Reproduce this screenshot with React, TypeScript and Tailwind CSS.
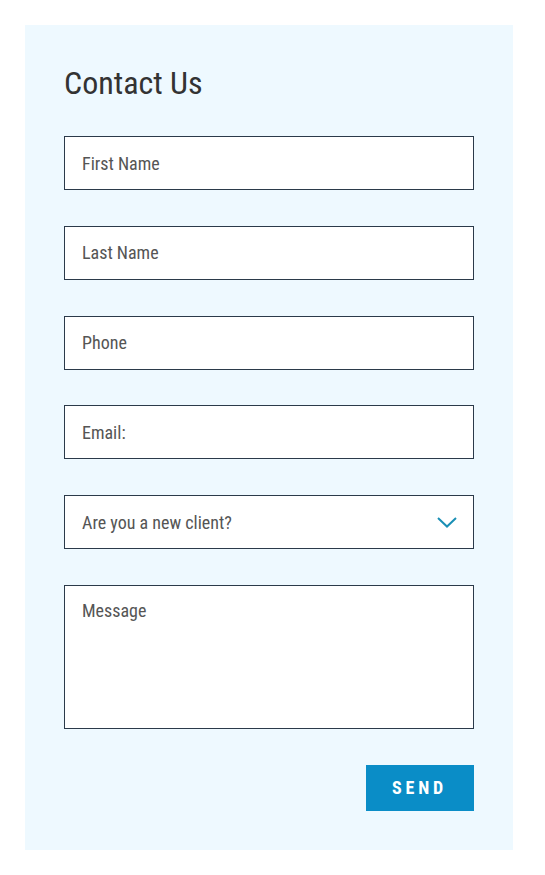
import React from 'react';

const fieldCls =
  "block w-full h-[54px] border border-[#2b3a4a] bg-white px-[17px] text-[18px] text-[#4a4a4a] placeholder-[#555] outline-none";

export default function App() {
  return (
    <div className="min-h-screen bg-white p-[25px] pr-[32px]" style={{ fontFamily: "'Roboto Condensed', 'Liberation Sans Narrow', 'DejaVu Sans Condensed', Roboto, sans-serif" }}>
      <div className="bg-[#eef9ff] px-[39px] pt-[38px] pb-[39px] font-stretch-condensed">
        <h2 className="text-[32px] leading-[40px] text-[#333] font-normal">Contact Us</h2>
        <form className="mt-[33px] flex flex-col gap-[35.8px]" onSubmit={(e) => e.preventDefault()}>
          <input type="text" placeholder="First Name" className={fieldCls} />
          <input type="text" placeholder="Last Name" className={fieldCls} />
          <input type="text" placeholder="Phone" className={fieldCls} />
          <input type="text" placeholder="Email:" className={fieldCls} />
          <div className="relative">
            <select className={`${fieldCls} appearance-none text-[#555]`} defaultValue="">
              <option value="" disabled>Are you a new client?</option>
              <option>Yes</option>
              <option>No</option>
            </select>
            <svg className="pointer-events-none absolute right-[17px] top-[22px]" width="20" height="11" viewBox="0 0 20 11" fill="none">
              <path d="M1 1l9 8.5L19 1" stroke="#1a8fb5" strokeWidth="2" />
            </svg>
          </div>
          <textarea placeholder="Message" className="block w-full h-[144px] resize-none border border-[#2b3a4a] bg-white px-[17px] pt-[11px] text-[18px] text-[#4a4a4a] placeholder-[#555] outline-none" />
          <div className="flex justify-end">
            <button type="submit" className="h-[46px] w-[108px] bg-[#0a8dc7] text-white text-[18px] font-bold tracking-[3.8px] pr-[1px]">
              SEND
            </button>
          </div>
        </form>
      </div>
    </div>
  );
}
